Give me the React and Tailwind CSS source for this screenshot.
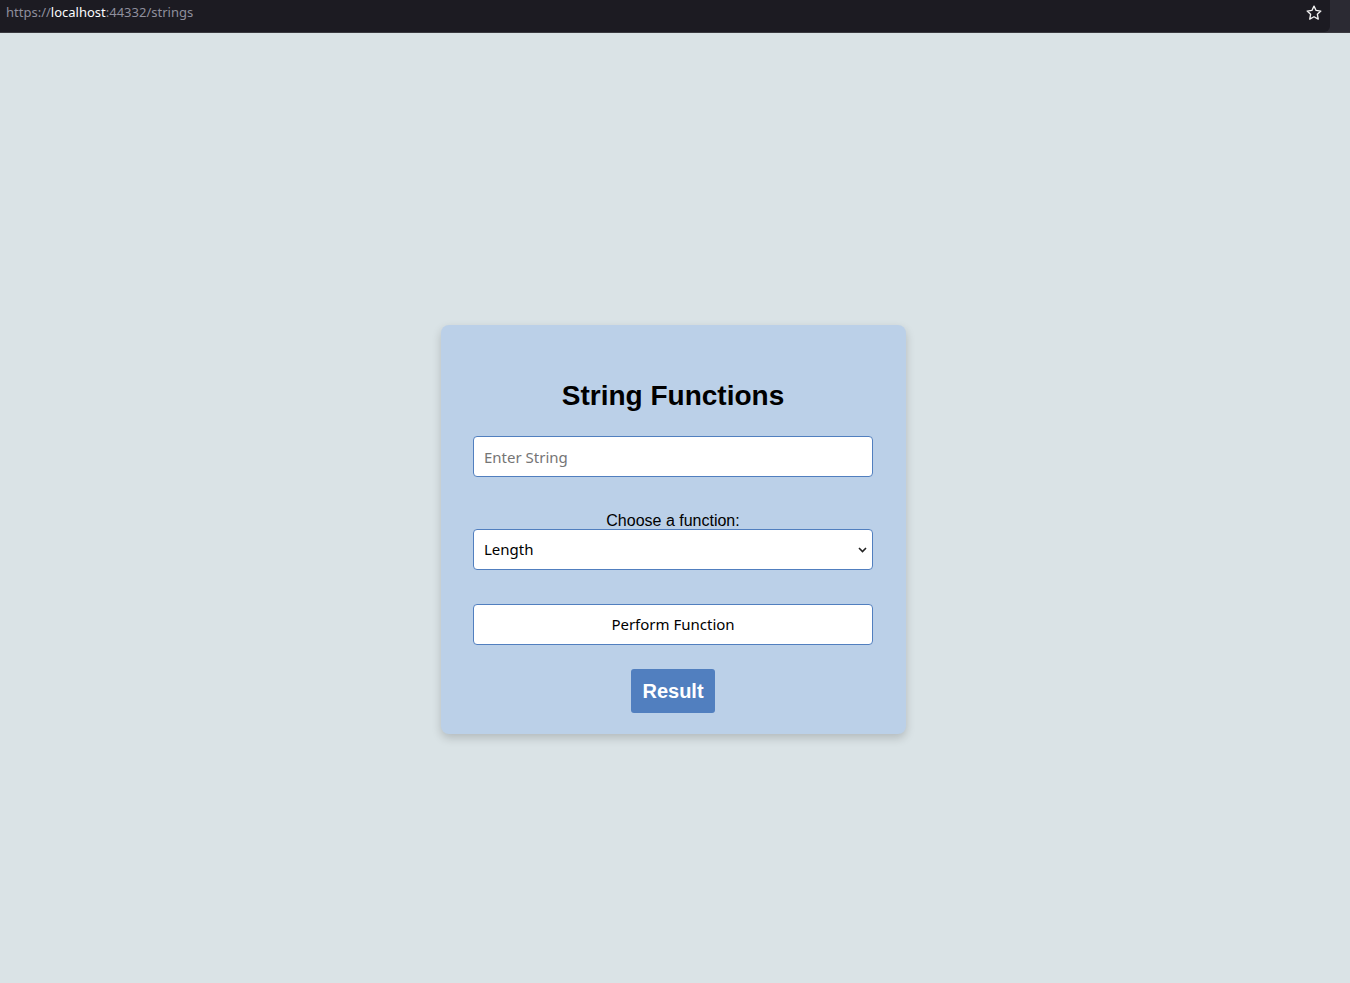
import React, { useState } from 'react';

function Star() {
  return (
    <svg width="18" height="18" viewBox="0 0 24 24" fill="none" stroke="#f2f2f2" strokeWidth="1.8" strokeLinejoin="round">
      <path d="M12 2.8l2.8 5.8 6.3.8-4.6 4.4 1.2 6.3L12 17l-5.7 3.1 1.2-6.3-4.6-4.4 6.3-.8z" />
    </svg>
  );
}

export default function App() {
  const [text, setText] = useState('');
  const [fn, setFn] = useState('length');

  return (
    <div className="min-h-[983px] flex flex-col bg-[#dae3e6]" style={{ fontFamily: '"Liberation Sans", Arial, sans-serif' }}>
      {/* browser bar */}
      <div className="h-[33px] flex bg-[#2b2a33] border-b border-[#3a3a40]">
        <div className="flex-1 mr-[20px] rounded-br-[6px] bg-[#1c1b22] flex items-center justify-between pl-[6px] pr-[7px] pb-[7px]">
          <div className="text-[13px] text-[#8f8f9d]" style={{ fontFamily: '"Noto Sans", sans-serif' }}>
            https://<span className="text-[#fbfbfe]">localhost</span>:44332/strings
          </div>
          <Star />
        </div>
      </div>

      <div className="flex-1 flex justify-center pt-[292px] pr-[4px]">
        <div className="w-[465px] h-[409px] bg-[#bbd0e8] rounded-[8px] shadow-[0_4px_10px_rgba(0,0,0,0.18)] px-[32px] pt-[53px] flex flex-col items-center">
          <h2 className="text-[28px] leading-[36px] font-bold text-black">String Functions</h2>

          <input
            type="text"
            value={text}
            onChange={(e) => setText(e.target.value)}
            placeholder="Enter String"
            className="mt-[22px] w-[400px] h-[41px] bg-white border border-[#517fbf] rounded-[4px] px-[10px] text-[15px] text-black placeholder:text-[#757575] outline-none"
            style={{ fontFamily: '"Noto Sans", sans-serif' }}
          />

          <label className="mt-[35px] mb-[-1px] text-[16px] leading-[18px] text-black">Choose a function:</label>
          <div className="relative w-[400px] h-[41px]">
            <select
              value={fn}
              onChange={(e) => setFn(e.target.value)}
              className="appearance-none w-full h-full bg-white border border-[#517fbf] rounded-[4px] px-[10px] text-[15px] text-black outline-none"
              style={{ fontFamily: '"Noto Sans", sans-serif' }}
            >
              <option value="length">Length</option>
              <option value="upper">Uppercase</option>
              <option value="lower">Lowercase</option>
              <option value="reverse">Reverse</option>
            </select>
            <svg className="absolute right-[6px] top-[18px] pointer-events-none" width="9" height="6" viewBox="0 0 9 6" fill="none" stroke="#222" strokeWidth="1.6">
              <path d="M1 1l3.5 3.5L8 1" />
            </svg>
          </div>

          <button
            type="button"
            className="mt-[34px] w-[400px] h-[41px] bg-white border border-[#517fbf] rounded-[4px] text-[15px] text-black"
            style={{ fontFamily: '"Noto Sans", sans-serif' }}
          >
            Perform Function
          </button>

          <button type="button" className="mt-[24px] w-[84px] h-[44px] bg-[#517fbf] rounded-[3px] text-white text-[20px] font-bold">
            Result
          </button>
        </div>
      </div>
    </div>
  );
}
